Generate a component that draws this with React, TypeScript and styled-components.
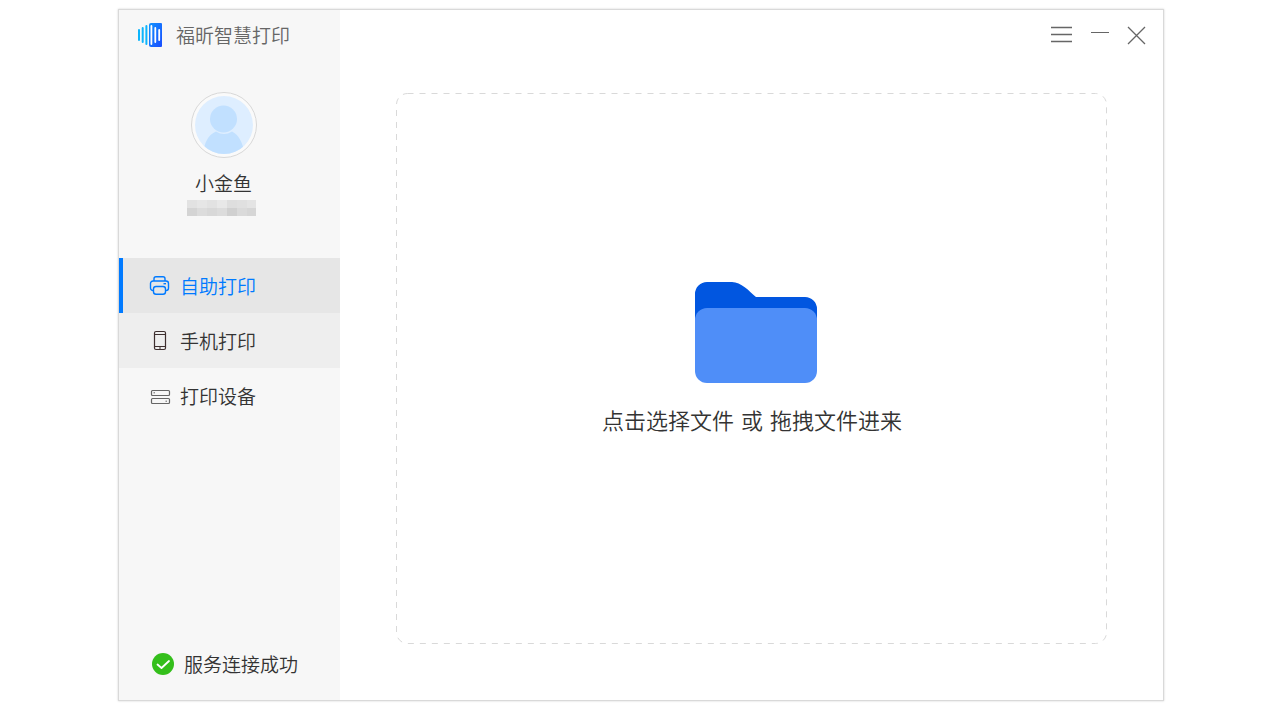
import React from 'react';
import styled, { createGlobalStyle } from 'styled-components';

const GlobalStyle = createGlobalStyle`
  *, *::before, *::after { box-sizing: border-box; }
  body {
    margin: 0;
    background: #ffffff;
    color: #333333;
    font-family: "Noto Sans CJK SC", sans-serif;
    font-weight: 350;
  }
  button { font: inherit; color: inherit; }
`;

const Desktop = styled.div`
  display: flex;
  min-height: 100vh;
  padding: 9px 116px 19px 118px;
`;

const Window = styled.div`
  display: flex;
  flex: 1;
  border: 1px solid #d9d9d9;
  box-shadow: 0 0 2px rgba(0, 0, 0, 0.18);
  background: #ffffff;
`;

const Sidebar = styled.aside`
  display: flex;
  flex-direction: column;
  flex: 0 0 221px;
  background: #f7f7f7;
`;

const Brand = styled.header`
  display: flex;
  align-items: center;
  gap: 13px;
  height: 50px;
  padding-left: 19px;
`;

const BrandName = styled.h1`
  margin: 0;
  color: #666666;
  font-size: 19px;
  line-height: 28px;
  font-weight: 350;
`;

const Profile = styled.section`
  display: flex;
  flex-direction: column;
  align-items: center;
  padding: 32px 12px 42px 0;
`;

const UserName = styled.div`
  margin-top: 11px;
  font-size: 19px;
  line-height: 28px;
`;

const Mosaic = styled.svg`
  display: block;
  margin-top: 3px;
  margin-right: 4px;
`;

const Nav = styled.nav`
  display: flex;
  flex-direction: column;
`;

const NavItem = styled.button<{ $bg: string; $active?: boolean }>`
  display: flex;
  align-items: center;
  gap: 9px;
  height: 55px;
  padding: 0 0 0 26px;
  border: 0;
  border-left: 4px solid ${(p) => (p.$active ? '#007aff' : p.$bg)};
  background: ${(p) => p.$bg};
  color: ${(p) => (p.$active ? '#007aff' : '#333333')};
  font-size: 19px;
  line-height: 28px;
  text-align: left;
  cursor: pointer;
`;

const Status = styled.div`
  display: flex;
  align-items: center;
  gap: 10px;
  margin-top: auto;
  padding: 0 0 22px 33px;
  font-size: 19px;
  line-height: 28px;
`;

const Main = styled.main`
  display: flex;
  flex-direction: column;
  flex: 1;
  min-width: 0;
`;

const TitleBar = styled.div`
  display: flex;
  justify-content: flex-end;
  align-items: center;
  gap: 15px;
  height: 50px;
  padding-right: 15px;
`;

const WindowButton = styled.button`
  display: flex;
  padding: 0;
  border: 0;
  background: none;
  color: #666666;
  cursor: pointer;
`;

const DropZone = styled.button`
  position: relative;
  display: flex;
  flex-direction: column;
  align-items: center;
  justify-content: center;
  gap: 23px;
  flex: 1;
  margin: 33px 57px 57px 56px;
  padding: 0 0 16px 2px;
  border: 0;
  background: none;
  cursor: pointer;
`;

const DashedOutline = styled.svg`
  position: absolute;
  inset: 0;
  width: 100%;
  height: 100%;
  overflow: visible;
  pointer-events: none;
`;

const DropLabel = styled.span`
  font-family: "DejaVu Sans", "Noto Sans CJK SC", sans-serif;
  font-size: 22px;
  line-height: 32px;
`;

const Logo = () => (
  <svg width="25" height="26" viewBox="0 0 25 26" aria-hidden="true">
    <defs>
      <linearGradient id="logoPanel" x1="0" y1="0" x2="1" y2="1">
        <stop offset="0" stopColor="#1194ff" />
        <stop offset="1" stopColor="#1a4dff" />
      </linearGradient>
    </defs>
    <g stroke="#0db5fc" strokeWidth="2" strokeLinecap="round">
      <path d="M1 8v10M4.700 6v14M8.400 4v18" />
    </g>
    <path d="M13 1H23a1 1 0 0 1 1 1V24a1 1 0 0 1-1 1H13a2 2 0 0 1-2-2V3a2 2 0 0 1 2-2Z" fill="url(#logoPanel)" />
    <path d="M13.400 4v18M17.300 6v14M21.200 8v10" stroke="#ffffff" strokeWidth="1.800" strokeLinecap="round" />
  </svg>
);

const Avatar = () => (
  <svg width="66" height="66" viewBox="0 0 66 66" role="img" aria-label="小金鱼">
    <defs>
      <clipPath id="avatarClip"><circle cx="33" cy="33" r="29" /></clipPath>
    </defs>
    <circle cx="33" cy="33" r="32.5" fill="#fafafa" stroke="#d8d8d8" />
    <circle cx="33" cy="33" r="29" fill="#deeeff" />
    <g fill="#c1e0ff" clipPath="url(#avatarClip)">
      <circle cx="32.5" cy="27" r="13.5" />
      <path d="M12 63c1-12 5-20 13-23.500q8 5 16 0C48 43 52 51 54 63Z" />
    </g>
  </svg>
);

const PrinterIcon = () => (
  <svg width="22" height="22" viewBox="0 0 22 22" fill="none" stroke="currentColor" strokeWidth="1.400" aria-hidden="true">
    <path d="M5 6V3.700a2 2 0 0 1 2-2h7a2 2 0 0 1 2 2V6" />
    <path d="M4.500 15.500H4A2.500 2.500 0 0 1 1.500 13V8.500A2.500 2.500 0 0 1 4 6h13A2.500 2.500 0 0 1 19.500 8.500V13a2.500 2.500 0 0 1-2.500 2.500h-.5" />
    <rect x="4.500" y="11.500" width="12" height="7.800" rx="2.500" />
    <path d="M14.500 8.700h2.500" />
  </svg>
);

const PhoneIcon = () => (
  <svg width="22" height="22" viewBox="0 0 22 22" fill="none" stroke="#3d2e2e" aria-hidden="true">
    <rect x="5.500" y="1.500" width="11" height="18" rx="1.500" strokeWidth="1.200" />
    <path d="M5.500 4.500h11M5.500 16.500h11M10 18h2" />
  </svg>
);

const DeviceIcon = () => (
  <svg width="22" height="22" viewBox="0 0 22 22" fill="none" stroke="#666666" aria-hidden="true">
    <rect x="2.500" y="5.500" width="18" height="5" rx="1" strokeWidth="1.200" />
    <rect x="2.500" y="13.500" width="18" height="5" rx="1" strokeWidth="1.200" />
    <path d="M4.500 7.800h1.500M16.500 16.200h1.500" />
  </svg>
);

const CheckIcon = () => (
  <svg width="22" height="22" viewBox="0 0 22 22" aria-hidden="true">
    <circle cx="11" cy="11" r="11" fill="#34bf1b" />
    <path d="M5.500 11.500l4 3.500 7.500-7" fill="none" stroke="#ffffff" strokeWidth="1.800" strokeLinecap="round" strokeLinejoin="round" />
  </svg>
);

const FolderIcon = () => (
  <svg width="130" height="101" viewBox="-8 0 130 101" aria-hidden="true">
    <path d="M0 12A12 12 0 0 1 12 0H37C46 0 54 9 61 15H110A12 12 0 0 1 122 27V50H0Z" fill="#0156e0" />
    <rect y="26" width="122" height="75" rx="12" fill="#4f8ef8" />
  </svg>
);

const mosaicRows = [
  ['#e2e2e2', '#e6e6e6', '#e2e2e2', '#e8e8e8', '#dedede', '#e0e0e0', '#e4e4e4'],
  ['#d4d4d4', '#dcdcdc', '#d8d8d8', '#dcdcdc', '#d0d0d0', '#dadada', '#d6d6d6'],
];

const HiddenAccount = () => (
  <Mosaic width="69" height="16" aria-hidden="true">
    {mosaicRows.map((row, y) =>
      row.map((fill, x) => <rect key={`${x}-${y}`} x={x * 10} y={y * 8} width="10" height="8" fill={fill} />),
    )}
  </Mosaic>
);

export default function App() {
  return (
    <>
      <GlobalStyle />
      <Desktop>
        <Window>
          <Sidebar>
            <Brand>
              <Logo />
              <BrandName>福昕智慧打印</BrandName>
            </Brand>
            <Profile>
              <Avatar />
              <UserName>小金鱼</UserName>
              <HiddenAccount />
            </Profile>
            <Nav>
              <NavItem $bg="#e6e6e6" $active aria-current="page"><PrinterIcon />自助打印</NavItem>
              <NavItem $bg="#eeeeee"><PhoneIcon />手机打印</NavItem>
              <NavItem $bg="#f7f7f7"><DeviceIcon />打印设备</NavItem>
            </Nav>
            <Status><CheckIcon />服务连接成功</Status>
          </Sidebar>
          <Main>
            <TitleBar>
              <WindowButton aria-label="菜单">
                <svg width="23" height="22" viewBox="0 0 23 22" stroke="currentColor" strokeWidth="1.300">
                  <path d="M0 3.500h21M0 10.500h21M0 17.500h21" />
                </svg>
              </WindowButton>
              <WindowButton aria-label="最小化">
                <svg width="22" height="22" viewBox="0 0 22 22" stroke="currentColor">
                  <path d="M2 8.500h18" />
                </svg>
              </WindowButton>
              <WindowButton aria-label="关闭">
                <svg width="22" height="22" viewBox="0 0 22 22" stroke="currentColor" strokeWidth="1.300">
                  <path d="M2 3l17 17M19 3l-17 17" />
                </svg>
              </WindowButton>
            </TitleBar>
            <DropZone>
              <DashedOutline aria-hidden="true">
                <rect x="0.5" y="0.5" width="100%" height="100%" rx="11" fill="none" stroke="#d9d9d9" strokeDasharray="6 6" />
              </DashedOutline>
              <FolderIcon />
              <DropLabel>点击选择文件 或 拖拽文件进来</DropLabel>
            </DropZone>
          </Main>
        </Window>
      </Desktop>
    </>
  );
}
